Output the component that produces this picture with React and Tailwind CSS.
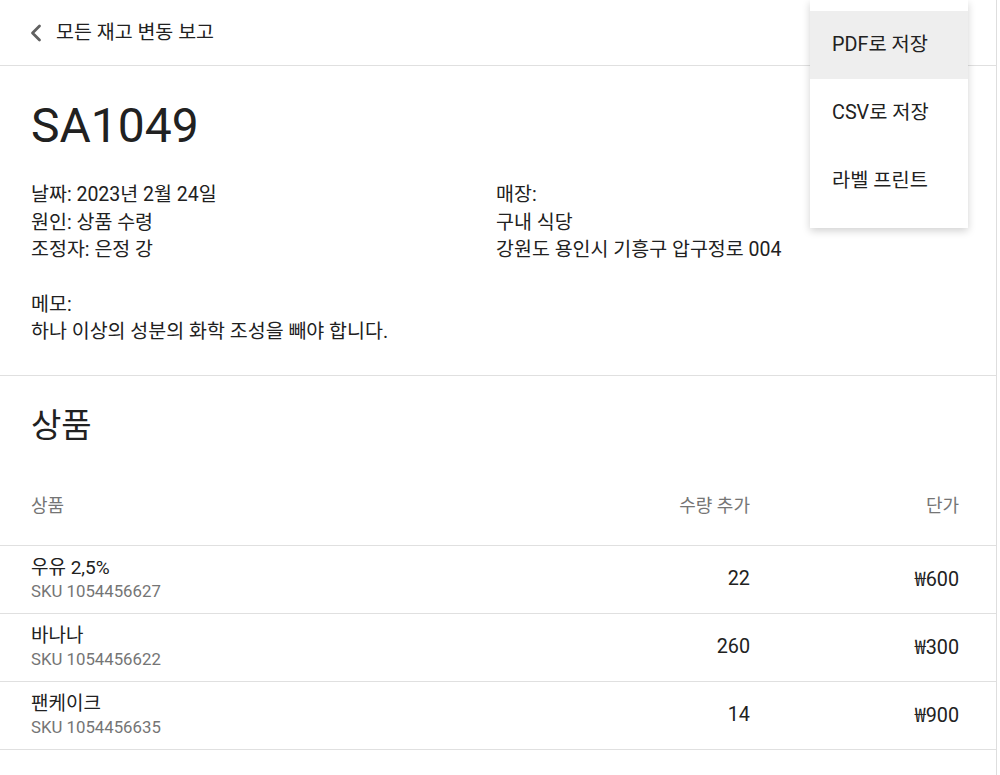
import React from "react";
import { ChevronLeft } from "lucide-react";

const items = [
  { name: "우유 2,5%", sku: "SKU 1054456627", qty: 22, price: "600" },
  { name: "바나나", sku: "SKU 1054456622", qty: 260, price: "300" },
  { name: "팬케이크", sku: "SKU 1054456635", qty: 14, price: "900" },
];

const Won = ({ v }) => (
  <span>
    <span style={{ fontFamily: "'Noto Sans CJK KR', sans-serif" }}>₩</span>
    {v}
  </span>
);

const App = () => {
  return (
    <div
      className="relative min-h-screen bg-white text-[#212121]"
      style={{ fontFamily: "Roboto, 'Noto Sans CJK KR', sans-serif" }}
    >
      <div className="w-[997px] min-h-screen border-r border-[#dedede]">
        {/* Top bar */}
        <div className="h-[66px] flex items-center pl-[22px] border-b border-[#e0e0e0]">
          <ChevronLeft className="w-[28px] h-[28px] text-[#616161]" strokeWidth={2.4} />
          <span className="ml-[6px] text-[19.5px]">모든 재고 변동 보고</span>
        </div>

        {/* Details */}
        <div className="px-[31px] pt-[32px] pb-[29px] border-b border-[#e0e0e0]">
          <h1 className="text-[48px] leading-[56px] font-normal">SA1049</h1>
          <div className="mt-[27px] grid grid-cols-[465px_1fr] text-[19.5px] leading-[27.5px]">
            <div>
              <p>날짜: 2023년 2월 24일</p>
              <p>원인: 상품 수령</p>
              <p>조정자: 은정 강</p>
            </div>
            <div>
              <p>매장:</p>
              <p>구내 식당</p>
              <p>강원도 용인시 기흥구 압구정로 004</p>
            </div>
          </div>
          <div className="mt-[27px] text-[19.5px] leading-[27.5px]">
            <p>메모:</p>
            <p>하나 이상의 성분의 화학 조성을 빼야 합니다.</p>
          </div>
        </div>

        {/* Products */}
        <div className="pt-[30px]">
          <h2 className="px-[31px] text-[33px] leading-[40px]">상품</h2>
          <div className="mt-[46px] h-[54px] flex items-start pl-[31px] pr-[37px] text-[18px] leading-[27px] text-[#757575] border-b border-[#e0e0e0]">
            <span className="flex-1">상품</span>
            <span className="w-[200px] text-right">수량 추가</span>
            <span className="w-[209px] text-right">단가</span>
          </div>
          {items.map((it) => (
            <div
              key={it.sku}
              className="h-[68px] flex items-center pl-[31px] pr-[37px] border-b border-[#e0e0e0]"
            >
              <div className="flex-1">
                <p className="text-[19px] leading-[25px]">{it.name}</p>
                <p className="text-[16.8px] leading-[23px] text-[#757575]">{it.sku}</p>
              </div>
              <span className="w-[200px] text-right text-[19.8px]">{it.qty}</span>
              <span className="w-[209px] text-right text-[19.8px]">
                <Won v={it.price} />
              </span>
            </div>
          ))}
        </div>
      </div>

      {/* Export menu */}
      <div className="absolute left-[810px] top-0 w-[158px] bg-white shadow-[0_3px_8px_rgba(0,0,0,0.18)] pt-[11px] pb-[13px]">
        <div className="h-[68px] flex items-center pl-[22px] text-[19.8px] bg-[#eeeeee]">PDF로 저장</div>
        <div className="h-[68px] flex items-center pl-[22px] text-[19.8px]">CSV로 저장</div>
        <div className="h-[68px] flex items-center pl-[22px] text-[19.8px]">라벨 프린트</div>
      </div>
    </div>
  );
};

export default App;
